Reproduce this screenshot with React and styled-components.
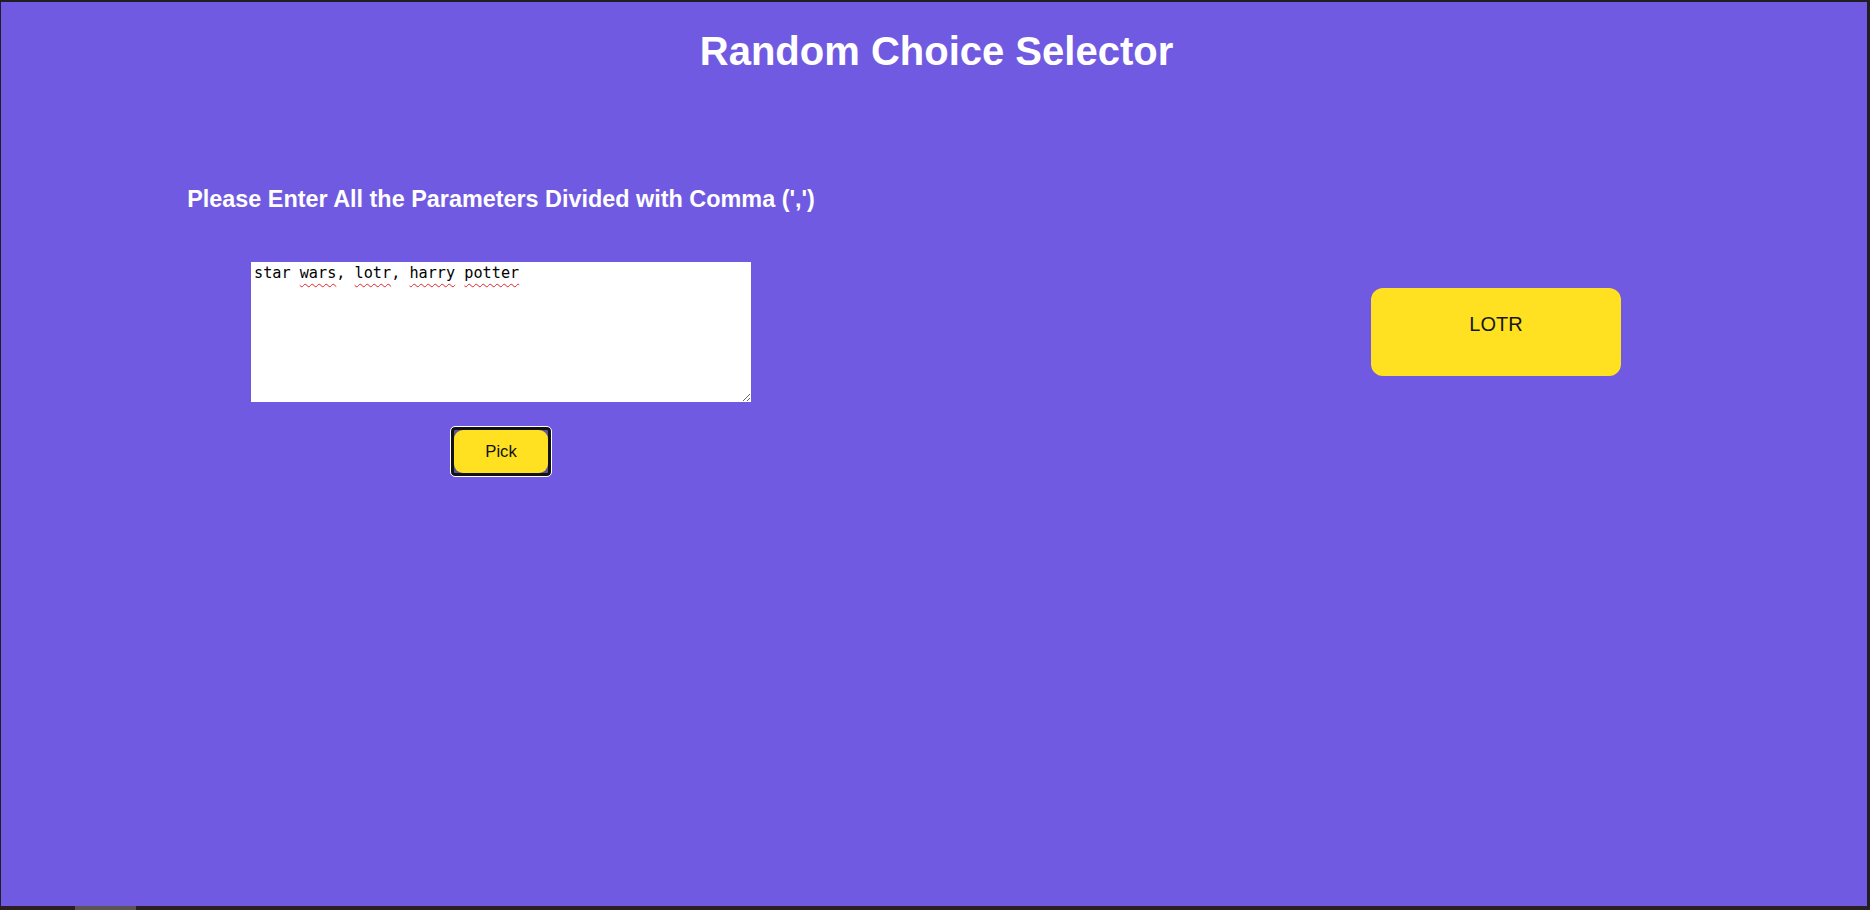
import React from "react";
import styled, { createGlobalStyle } from "styled-components";

// Page-wide reset: the screenshot sits inside a dark window frame
const GlobalStyle = createGlobalStyle`
  html, body {
    margin: 0;
    padding: 0;
  }
  body {
    background: #201c21;
    font-family: "Liberation Sans", Arial, sans-serif;
  }
`;

const Frame = styled.div`
  display: flex;
  flex-direction: column;
  height: 910px;
  box-sizing: border-box;
  padding: 2px 3px 0 1px;
  background: #221d22;
`;

const Page = styled.main`
  flex: 1;
  display: flex;
  flex-direction: column;
  background: #715ae2;
  color: #ffffff;
`;

const Title = styled.h1`
  margin: 26px 0 0;
  padding-left: 5px;
  font-size: 40px;
  line-height: 46px;
  font-weight: 700;
  text-align: center;
`;

const Content = styled.section`
  display: flex;
  align-items: flex-start;
  margin-top: 112px;
`;

const LeftPanel = styled.div`
  width: 1000px;
  display: flex;
  flex-direction: column;
  align-items: center;
`;

const Prompt = styled.h3`
  margin: 0;
  font-size: 23.4px;
  line-height: 27px;
  font-weight: 700;
`;

// Textarea with a backdrop behind it that draws the spell-check squiggles
const Field = styled.div`
  position: relative;
  margin-top: 49px;
  width: 500px;
  height: 140px;
  background: #ffffff;
`;

const monoText = `
  font-family: "DejaVu Sans Mono", "Liberation Mono", monospace;
  font-size: 15.2px;
  line-height: 19px;
  padding: 2px 3px;
  box-sizing: border-box;
`;

const Backdrop = styled.div`
  ${monoText}
  position: absolute;
  inset: 0;
  color: transparent;
  white-space: pre-wrap;
  pointer-events: none;
`;

const Misspelled = styled.span`
  text-decoration: underline wavy #e3232b;
  text-decoration-thickness: 1px;
  text-underline-offset: 5px;
`;

const Input = styled.textarea`
  ${monoText}
  position: relative;
  display: block;
  width: 100%;
  height: 100%;
  margin: 0;
  border: none;
  outline: none;
  background: transparent;
  color: #000000;
`;

// The button is shown with its focus ring, as right after a click
const PickButton = styled.button`
  margin-top: 25px;
  width: 100px;
  height: 49px;
  box-sizing: border-box;
  padding: 0;
  border: 3px solid #121212;
  border-radius: 4px;
  outline: 1px solid #ffffff;
  background: #5d5495;
  cursor: pointer;
`;

const Face = styled.span`
  display: flex;
  align-items: center;
  justify-content: center;
  height: 100%;
  border-radius: 9px;
  background: #ffe121;
  color: #111111;
  font-family: "Liberation Sans", Arial, sans-serif;
  font-size: 16.67px;
`;

const RightPanel = styled.div`
  margin-left: 370px;
  margin-top: 102px;
`;

const ResultCard = styled.div`
  width: 250px;
  height: 88px;
  box-sizing: border-box;
  padding-top: 25px;
  border-radius: 12px;
  background: #ffe121;
  color: #161616;
  font-size: 20px;
  line-height: 23px;
  text-align: center;
`;

const BottomBar = styled.div`
  display: flex;
  height: 4px;
  background: #2a1f23;
  margin: 0 -3px 0 -1px;
`;

const Thumb = styled.div`
  margin-left: 75px;
  width: 61px;
  background: #5c5454;
`;

const App = () => {
  return (
    <>
      <GlobalStyle />
      <Frame>
        <Page>
          <Title>Random Choice Selector</Title>
          <Content>
            <LeftPanel>
              <Prompt>Please Enter All the Parameters Divided with Comma (',')</Prompt>
              <Field>
                <Backdrop aria-hidden="true">
                  star <Misspelled>wars</Misspelled>, <Misspelled>lotr</Misspelled>,{" "}
                  <Misspelled>harry</Misspelled> <Misspelled>potter</Misspelled>
                </Backdrop>
                <Input spellCheck={false} defaultValue="star wars, lotr, harry potter" />
              </Field>
              <PickButton>
                <Face>Pick</Face>
              </PickButton>
            </LeftPanel>
            <RightPanel>
              <ResultCard>LOTR</ResultCard>
            </RightPanel>
          </Content>
        </Page>
        <BottomBar>
          <Thumb />
        </BottomBar>
      </Frame>
    </>
  );
};

export default App;
